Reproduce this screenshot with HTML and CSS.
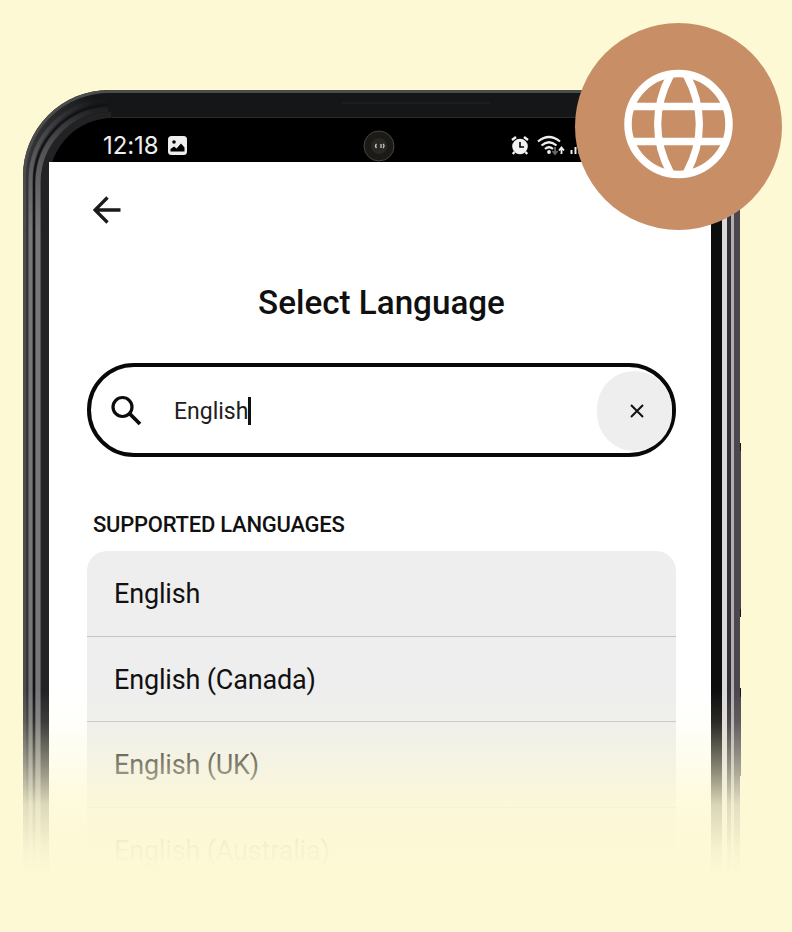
FILE: index.html
```html
<!DOCTYPE html>
<html lang="en">
<head>
<meta charset="utf-8">
<title>Select Language</title>
<link rel="stylesheet" href="styles.css">
</head>
<body>
<div class="stage">
  <svg class="bezel" viewBox="0 0 792 932" aria-hidden="true">
    <defs>
      <linearGradient id="shell" x1="0" x2="1" y1="0" y2="0">
        <stop offset="0" stop-color="#37373a"/><stop offset=".1" stop-color="#151617"/><stop offset=".9" stop-color="#151617"/><stop offset="1" stop-color="#4a464d"/>
      </linearGradient>
      <linearGradient id="rim" gradientUnits="userSpaceOnUse" x1="0" x2="0" y1="98" y2="230">
        <stop offset="0" stop-color="#707371" stop-opacity="0"/><stop offset=".4" stop-color="#77787b" stop-opacity=".5"/><stop offset="1" stop-color="#77777b"/>
      </linearGradient>
    </defs>
    <path d="M739 443h2v174h-2zM739 688h2v88h-2z" fill="#4b464a"/>
    <path d="M739 443h2v8h-2zM739 609h2v8h-2zM739 688h2v9h-2z" fill="#17161a"/>
    <path d="M23 932V176A86 86 0 0 1 109 90H654A86 86 0 0 1 740 176V932Z" fill="url(#shell)"/>
    <path d="M24.500 932V176A84.500 84.500 0 0 1 109 91.500H654" fill="none" stroke="#4b4d4c" stroke-width="3"/>
    <path d="M30.500 932V180A80 80 0 0 1 108 100" fill="none" stroke="url(#rim)" stroke-width="4"/>
    <path d="M34 932V182A77 77 0 0 1 108 105" fill="none" stroke="#121214" stroke-width="2"/>
    <path d="M38 932V182A74 74 0 0 1 108 109" fill="none" stroke="url(#rim)" stroke-width="5"/>
    <path d="M45 932V182A66 66 0 0 1 111 116" fill="none" stroke="#222225" stroke-width="8"/>
    <path d="M49 932V182A64 64 0 0 1 113 118H711V932Z" fill="#000"/>
    <path d="M112 117.500H600" fill="none" stroke="#2b2a27"/>
    <path d="M342 103H490" stroke="#242628"/>
    <path d="M711 170h11v762h-11z" fill="#0d0d0e"/>
    <path d="M722 170h5v762h-5z" fill="#dcd9da"/>
    <path d="M727 170h4v762h-4z" fill="#343137"/>
    <path d="M731 170h3v762h-3z" fill="#b3adb1"/>
    <path d="M734 170h6v762h-6z" fill="#4b474e"/>
  </svg>

  <main class="screen">
    <header class="status">
      <span class="clock">12:18</span>
      <svg class="photo" viewBox="0 0 19 19"><rect width="19" height="19" rx="3.500" fill="#eee"/><circle cx="6" cy="6" r="1.800" fill="#000"/><path d="M2.500 15.500V13l3.500-2.500 2.500 2 4.500-5 3.500 4v4z" fill="#000"/></svg>
      <svg class="camera" viewBox="0 0 32 32"><circle cx="16" cy="16" r="15" fill="#1b1a17" stroke="#47463f"/><circle cx="16" cy="16" r="8" fill="#292824"/><path d="M13.500 14q-2 2 0 4M18 14v4M20 14q2 1.500 0 4" fill="none" stroke="#c8c8c0" stroke-width="1.300"/></svg>
      <svg class="signals" viewBox="0 0 90 22">
        <circle cx="9" cy="11.500" r="7.800" fill="#f2f2f2"/><path d="M1 5l4-3M17 5l-4-3M3.500 17L1.800 19M14.500 17l1.700 2" stroke="#f2f2f2" stroke-width="2.400"/><path d="M9 7v5h4" fill="none" stroke="#000" stroke-width="1.600"/>
        <path d="M27 6.500Q38 -2.500 49 6.500M30.500 10.500Q38 4 45.500 10.500M34 14Q38 10.500 42 14" fill="none" stroke="#eee" stroke-width="2.200"/><circle cx="38" cy="17" r="1.900" fill="#eee"/>
        <path d="M44 12v6M41.500 16l2.500 3 2.500-3" fill="none" stroke="#666" stroke-width="1.800"/><path d="M50.500 19v-6M48 15.500l2.500-3 2.500 3" fill="none" stroke="#eee" stroke-width="1.800"/>
        <path d="M60.500 19v-4M64.500 19v-7M68.500 19V9M72.500 19V6" stroke="#eee" stroke-width="2"/>
      </svg>
    </header>
    <section class="content">
      <svg class="back" viewBox="0 0 28 28"><path d="M27.500 14H3M14.500 1.500L2 14l12.500 12.500" fill="none" stroke="#1a1a1a" stroke-width="3.300"/></svg>
      <h1 class="title">Select Language</h1>
      <div class="search">
        <svg class="lens" viewBox="0 0 32 32"><circle cx="11.500" cy="12" r="9.500" fill="none" stroke="#0c0c0c" stroke-width="3.200"/><path d="M18.500 18.500L29 29" stroke="#0c0c0c" stroke-width="3.800"/></svg>
        <span class="query">English</span><span class="caret"></span>
        <button class="clear" aria-label="Clear"><svg viewBox="0 0 14 14"><path d="M1 1l12 12M13 1L1 13" stroke="#111" stroke-width="2"/></svg></button>
      </div>
      <h2 class="label">SUPPORTED LANGUAGES</h2>
      <ul class="list">
        <li>English</li>
        <li>English (Canada)</li>
        <li>English (UK)</li>
        <li>English (Australia)</li>
      </ul>
    </section>
  </main>
  <div class="fade"></div>
  <div class="badge">
    <svg viewBox="0 0 110 110" fill="none" stroke="#fff" stroke-width="7.500"><circle cx="54.500" cy="55" r="50.500"/><path d="M8 37.500H101M8 72.500H101M46.500 6C29.500 38 29.500 72 46.500 104M62.500 6C79.500 38 79.500 72 62.500 104"/></svg>
  </div>
</div>
</body>
</html>
```
FILE: styles.css
```css
* { box-sizing: border-box; }
body { margin: 0; background: #fdf9d5; font-family: Roboto, "Liberation Sans", sans-serif; color: #111; }
.stage { position: relative; width: 792px; height: 932px; overflow: hidden; padding: 118px 81px 0 49px; }
.bezel { position: absolute; inset: 0; width: 792px; height: 932px; }
.screen { position: relative; height: 814px; }
.status { display: flex; height: 44px; padding: 11px 0 0 54px; align-items: center; color: #eee; }
.clock { width: 65px; font: 24px/30px Inter, sans-serif; letter-spacing: -.1px; white-space: nowrap; }
.photo { width: 19px; height: 19px; margin-top: -1px; }
.camera { width: 32px; height: 32px; margin-left: 176px; margin-top: 1px; }
.signals { width: 90px; height: 22px; margin-left: 116px; }
.content { height: 770px; background: #fff; padding: 34px 35px 0 38px; }
.back { display: block; width: 28px; height: 28px; margin-left: 6px; }
.title { margin: 57px 0 0; height: 44px; font-size: 33.200px; line-height: 44px; font-weight: 500; text-align: center; color: #101010; }
.search { display: flex; align-items: center; height: 94px; margin-top: 38px; border: 4px solid #080808; border-radius: 47px; padding: 1px 0 0 20px; }
.lens { width: 32px; height: 32px; margin-right: 31px; }
.query { font-size: 23px; line-height: 30px; color: #202020; padding-top: 2px; }
.caret { width: 3px; height: 28px; background: #111; }
.clear { display: flex; align-items: center; justify-content: center; width: 75px; height: 80px; margin-left: auto; padding: 1px 0 0 5px; border: 0; border-radius: 40px; background: #eee; }
.clear svg { width: 14px; height: 14px; }
.label { margin: 53px 0 0 6px; height: 30px; font-size: 22px; line-height: 30px; font-weight: 500; letter-spacing: -.25px; white-space: nowrap; }
.list { margin: 11px 0 0; padding: 0; list-style: none; background: #eee; border-radius: 20px 20px 0 0; }
.list li { height: 85.700px; padding-left: 27px; border-bottom: 1px solid #c4c4c4; font-size: 27px; line-height: 86px; letter-spacing: -.17px; }
.fade { position: absolute; inset: 690px 0 0; background: linear-gradient(rgba(253,249,213,0) 0, rgba(253,249,213,.12) 32px, rgba(253,249,213,.48) 75px, rgba(253,249,213,.85) 115px, rgba(253,249,213,.97) 158px, #fdf9d5 185px); }
.badge { position: absolute; left: 575px; top: 23px; width: 207px; height: 207px; border-radius: 50%; background: #c88f67; }
.badge svg { position: absolute; left: 49px; top: 46px; width: 110px; height: 110px; }
```
